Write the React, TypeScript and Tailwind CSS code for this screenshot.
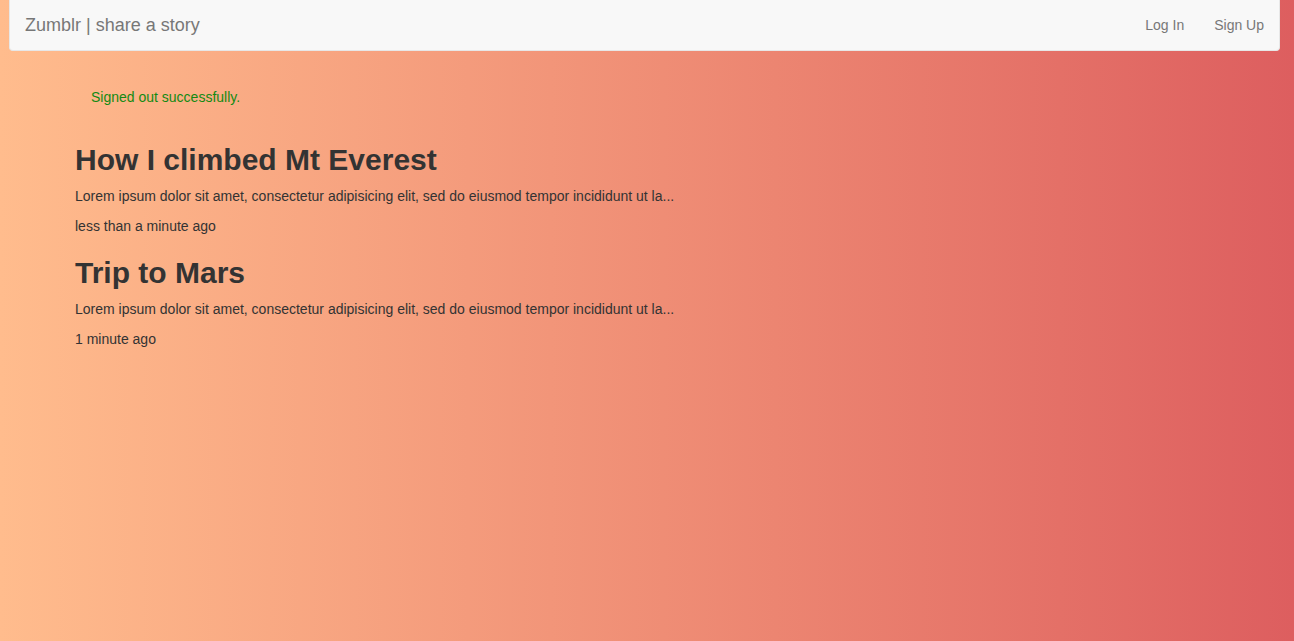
import React from 'react'

const posts = [
  { title: 'How I climbed Mt Everest', when: 'less than a minute ago' },
  { title: 'Trip to Mars', when: '1 minute ago' },
]

const excerpt =
  'Lorem ipsum dolor sit amet, consectetur adipisicing elit, sed do eiusmod tempor incididunt ut la...'

export default function App() {
  return (
    <div
      className="min-h-[641px] bg-gradient-to-r from-[#ffbc8d] to-[#dd5e5f] text-[14px] leading-[20px] text-[#333]"
      style={{ fontFamily: '"Liberation Sans", Arial, sans-serif' }}
    >
      <nav className="ml-[9px] mr-[14px] flex h-[51px] items-center justify-between rounded-b-[4px] border border-t-0 border-[#e7e7e7] bg-[#f8f8f8]">
        <a className="px-[15px] py-[15px] text-[18px] leading-[20px] text-[#777]">Zumblr | share a story</a>
        <ul className="flex">
          <li>
            <a className="block px-[15px] py-[15px] text-[#777]">Log In</a>
          </li>
          <li>
            <a className="block px-[15px] py-[15px] text-[#777]">Sign Up</a>
          </li>
        </ul>
      </nav>

      <div className="px-[75px] pt-[21px]">
        <div className="mb-[21px] py-[15px] pl-[16px] pr-[15px] text-[#138a13]">Signed out successfully.</div>

        {posts.map((post) => (
          <div key={post.title}>
            <h2 className="mt-[20px] mb-[10px] text-[30px] font-bold leading-[33px]">{post.title}</h2>
            <p className="mb-[10px]">{excerpt}</p>
            <p className="mb-[10px]">{post.when}</p>
          </div>
        ))}
      </div>
    </div>
  )
}
